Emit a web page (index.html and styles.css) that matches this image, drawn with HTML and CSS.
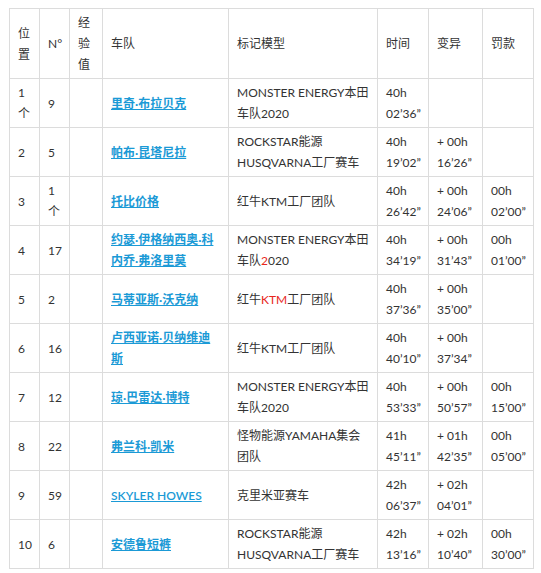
FILE: index.html
```html
<!DOCTYPE html>
<html lang="zh">
<head>
<meta charset="utf-8">
<link rel="stylesheet" href="styles.css">
</head>
<body>
<table class="results">
<colgroup>
<col class="c-pos"><col class="c-no"><col class="c-exp"><col class="c-team"><col class="c-model"><col class="c-time"><col class="c-diff"><col class="c-pen">
</colgroup>
<thead>
<tr><th>位<br>置</th><th>N°</th><th>经<br>验<br>值</th><th>车队</th><th>标记模型</th><th>时间</th><th>变异</th><th>罚款</th></tr>
</thead>
<tbody>
<tr><td>1<br>个</td><td>9</td><td></td><td><a href="#">里奇·布拉贝克</a></td><td>MONSTER ENERGY本田<br>车队2020</td><td>40h<br>02’36”</td><td></td><td></td></tr>
<tr><td>2</td><td>5</td><td></td><td><a href="#">帕布·昆塔尼拉</a></td><td>ROCKSTAR能源<br>HUSQVARNA工厂赛车</td><td>40h<br>19’02”</td><td>+ 00h<br>16’26”</td><td></td></tr>
<tr><td>3</td><td>1<br>个</td><td></td><td><a href="#">托比价格</a></td><td>红牛KTM工厂团队</td><td>40h<br>26’42”</td><td>+ 00h<br>24’06”</td><td>00h<br>02’00”</td></tr>
<tr><td>4</td><td>17</td><td></td><td><a href="#">约瑟·伊格纳西奥·科内乔·弗洛里莫</a></td><td>MONSTER ENERGY本田<br>车队<span class="red">2</span>020</td><td>40h<br>34’19”</td><td>+ 00h<br>31’43”</td><td>00h<br>01’00”</td></tr>
<tr><td>5</td><td>2</td><td></td><td><a href="#">马蒂亚斯·沃克纳</a></td><td>红牛<span class="red">KTM</span>工厂团队</td><td>40h<br>37’36”</td><td>+ 00h<br>35’00”</td><td></td></tr>
<tr><td>6</td><td>16</td><td></td><td><a href="#">卢西亚诺·贝纳维迪斯</a></td><td>红牛KTM工厂团队</td><td>40h<br>40’10”</td><td>+ 00h<br>37’34”</td><td></td></tr>
<tr><td>7</td><td>12</td><td></td><td><a href="#">琼·巴雷达·博特</a></td><td>MONSTER ENERGY本田<br>车队2020</td><td>40h<br>53’33”</td><td>+ 00h<br>50’57”</td><td>00h<br>15’00”</td></tr>
<tr><td>8</td><td>22</td><td></td><td><a href="#">弗兰科·凯米</a></td><td>怪物能源YAMAHA集会<br>团队</td><td>41h<br>45’11”</td><td>+ 01h<br>42’35”</td><td>00h<br>05’00”</td></tr>
<tr><td>9</td><td>59</td><td></td><td><a href="#">SKYLER HOWES</a></td><td>克里米亚赛车</td><td>42h<br>06’37”</td><td>+ 02h<br>04’01”</td><td></td></tr>
<tr><td>10</td><td>6</td><td></td><td><a href="#">安德鲁短裤</a></td><td>ROCKSTAR能源<br>HUSQVARNA工厂赛车</td><td>42h<br>13’16”</td><td>+ 02h<br>10’40”</td><td>00h<br>30’00”</td></tr>
</tbody>
</table>
</body>
</html>
```
FILE: styles.css
```css
html, body {
  background: #ffffff;
}
body {
  margin: 8px 0 0 9px;
  font-family: Lato, "Noto Sans CJK SC", sans-serif;
  font-size: 12px;
  line-height: 21px;
  color: #333333;
}
.results {
  border-collapse: collapse;
  table-layout: fixed;
  width: 524px;
}
.c-pos { width: 30px; }
.c-no { width: 30px; }
.c-exp { width: 33px; }
.c-team { width: 126px; }
.c-model { width: 149px; }
.c-time { width: 51px; }
.c-diff { width: 54px; }
.c-pen { width: 51px; }
.results th,
.results td {
  border: 1px solid #dcdcdc;
  padding: 3px 8px 3px 8px;
  text-align: left;
  vertical-align: middle;
  font-weight: normal;
  height: 42px;
}
.results th {
  height: 63px;
}
.results a {
  color: #1b9ad6;
  text-decoration: underline;
  font-weight: 600;
}
.red {
  color: #e8261c;
}
```
